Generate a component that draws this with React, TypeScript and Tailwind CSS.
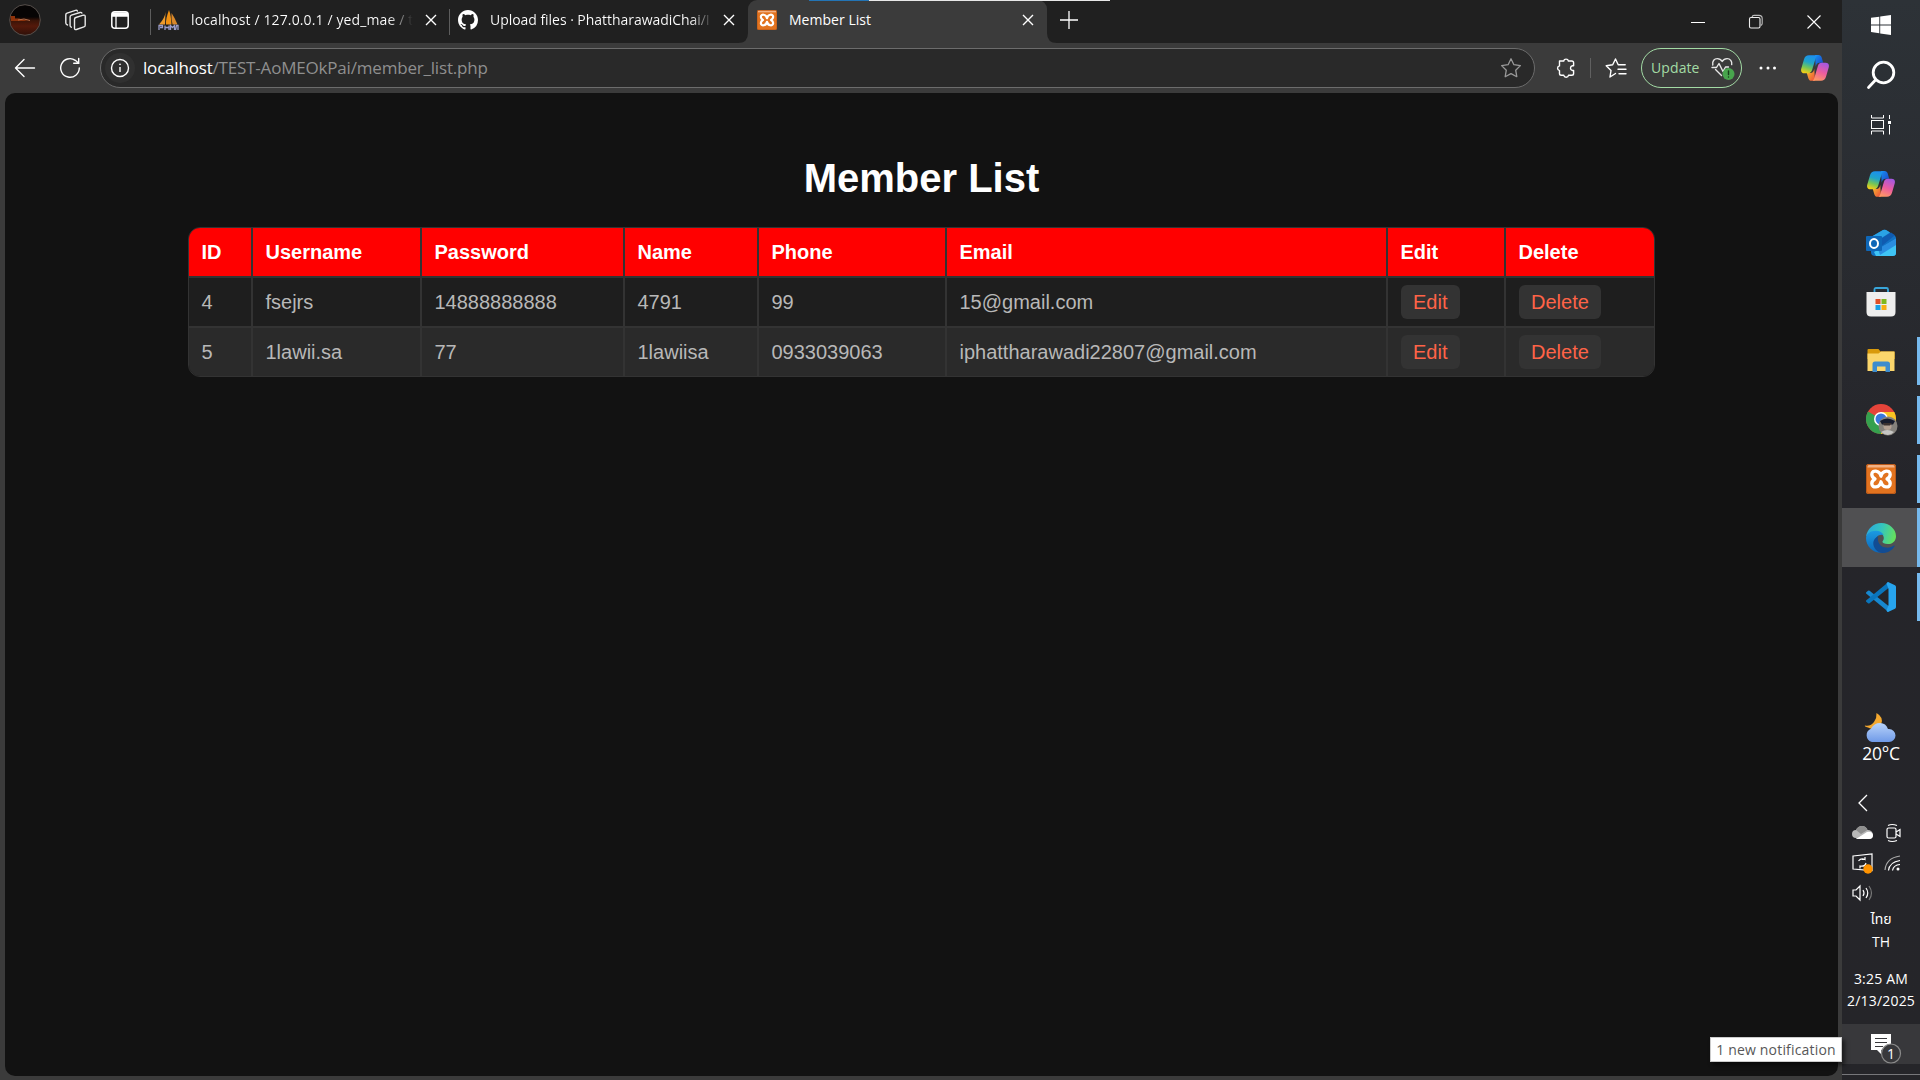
import React from 'react';

const UI = "font-['Open_Sans','Noto_Sans',sans-serif]";

const members = [
  { id: '4', username: 'fsejrs', password: '14888888888', name: '4791', phone: '99', email: '15@gmail.com' },
  { id: '5', username: '1lawii.sa', password: '77', name: '1lawiisa', phone: '0933039063', email: 'iphattharawadi22807@gmail.com' },
];

function Close({ className = '' }: { className?: string }) {
  return (
    <svg className={'shrink-0 ' + className} width="12" height="12" viewBox="0 0 12 12" stroke="#fff" strokeWidth="1.4">
      <path d="M1 1l10 10M11 1L1 11" />
    </svg>
  );
}

function XamppIcon({ size }: { size: number }) {
  return (
    <svg className="shrink-0" width={size} height={size} viewBox="0 0 30 30">
      <rect width="30" height="30" rx="2.5" fill="#e2731f" />
      <rect x="1.5" y="1" width="27" height="2.5" fill="#f2b184" />
      <rect x="0.5" y="0.5" width="29" height="29" rx="2.5" fill="none" stroke="#b9591a" />
      <path
        d="M15 12.200C13.500 6 6 5.500 5.800 10.300C5.700 12.500 7.300 14 9 15C7 16 5.700 17.500 5.800 19.700C6 24.500 13.500 24 15 17.800C16.500 24 24 24.500 24.200 19.700C24.300 17.500 23 16 21 15C22.700 14 24.300 12.500 24.200 10.300C24 5.500 16.500 6 15 12.200z"
        fill="none" stroke="#fff" strokeWidth="3.300" strokeLinejoin="round"
      />
    </svg>
  );
}

function CopilotIcon({ id }: { id: string }) {
  const a = id + 'a', b = id + 'b', c = id + 'c', d = id + 'd';
  return (
    <svg className="shrink-0" width="28" height="26" viewBox="0 0 28 26">
      <defs>
        <linearGradient id={a} x1="0.6" y1="0" x2="0.3" y2="1">
          <stop offset="0" stopColor="#1b8ff0" /><stop offset="0.4" stopColor="#20a4c8" />
          <stop offset="0.7" stopColor="#74c657" /><stop offset="1" stopColor="#f4cf16" />
        </linearGradient>
        <linearGradient id={b} x1="0.7" y1="0" x2="0.3" y2="1">
          <stop offset="0" stopColor="#a558e0" /><stop offset="0.5" stopColor="#ec5c9f" /><stop offset="1" stopColor="#ff9a62" />
        </linearGradient>
        <linearGradient id={c} x1="0" y1="0" x2="1" y2="1">
          <stop offset="0" stopColor="#1790f0" /><stop offset="1" stopColor="#1c3fc4" />
        </linearGradient>
        <linearGradient id={d} x1="0" y1="0" x2="1" y2="1">
          <stop offset="0" stopColor="#f7c22b" /><stop offset="1" stopColor="#ee4b3d" />
        </linearGradient>
      </defs>
      <path d="M14 0h3.500c1.700 0 2.700 1 3.200 2.600l1.500 5.200h-3.500c-2.500 0-3.300 1.500-4 4z" fill={`url(#${c})`} />
      <path d="M14 25.800h-3.500c-1.700 0-2.700-1-3.200-2.600L5.800 18h3.500c2.500 0 3.300-1.500 4-4z" fill={`url(#${d})`} />
      <path d="M8 .2h9.500c-1.500 0-2.300 1.200-2.800 2.900l-3.600 12c-.6 2-1.900 3.200-4 3.200H3.500C.8 18.300-.5 16.500.3 13.500L3 4.200C3.800 1.500 5.400.2 8 .2z" fill={`url(#${a})`} />
      <path d="M20 25.800h-9.500c1.500 0 2.300-1.200 2.800-2.900l3.600-12c.6-2 1.900-3.200 4-3.200h3.600c2.700 0 4 1.800 3.200 4.800L25 21.800c-.8 2.700-2.400 4-5 4z" fill={`url(#${b})`} />
    </svg>
  );
}

function TabStrip() {
  return (
    <div className="relative flex h-[43px] shrink-0 items-start bg-[#202020] text-white">
      <svg className="ml-[9px] mt-[4px] shrink-0" width="32" height="32" viewBox="0 0 32 32">
        <defs>
          <linearGradient id="avatar" x1="0" y1="0" x2="0" y2="1">
            <stop offset="0.4" stopColor="#060404" /><stop offset="0.52" stopColor="#3a1408" /><stop offset="0.7" stopColor="#54190a" /><stop offset="1" stopColor="#2e1009" />
          </linearGradient>
        </defs>
        <circle cx="16" cy="16" r="15.300" fill="url(#avatar)" stroke="#57504c" strokeWidth="1" />
        <path d="M1.500 12h4.500v2.500h4l9 2.500H2z" fill="#8f330b" />
        <path d="M9 16l6-1 6 1.500" stroke="#b56d48" fill="none" />
      </svg>
      <svg className="ml-[23px] mt-[9px] shrink-0" width="24" height="23" viewBox="0 0 24 23" fill="none" stroke="#e8e8e8" strokeWidth="1.400" strokeLinejoin="round" strokeLinecap="round">
        <path d="M10.500 10.200q0-1.300 1.300-1.700l7.500-2.300q1.900-.5 1.900 1.300v8.700q0 1.300-1.300 1.700l-7.500 2.600q-1.900.5-1.900-1.300z" />
        <path d="M7.300 18.200q-1.200-.4-1.200-1.800V8q0-1.400 1.300-1.800l8.600-2.700q1.400-.4 1.900.6" />
        <path d="M3.500 16q-1.700-.6-1.700-2V5.800q0-1.300 1.300-1.700L11.500 1.400q1.400-.4 1.900.6" />
      </svg>
      <svg className="ml-[23px] mt-[11px] shrink-0" width="18" height="18" viewBox="0 0 18 18" fill="none" stroke="#fff" strokeWidth="1.500">
        <rect x="0.800" y="0.800" width="16.400" height="16.400" rx="3" />
        <path d="M1 3.500h16" strokeWidth="4.500" />
        <path d="M5 5v12" strokeWidth="1.300" />
      </svg>
      <div className="ml-[21px] mt-[9px] h-[26px] w-px bg-[#5d5d5d]" />

      <div className="flex h-10 w-[298px] items-center pl-[7px]">
        <svg className="shrink-0" width="21" height="21" viewBox="0 0 21 21">
          <path d="M7.500 2Q7 8 1 14.500h6z" fill="#ec9a2c" />
          <path d="M11 0Q7.500 9 8 14.500h5.500Q13 5 11 0z" fill="#f29111" />
          <path d="M13.500 3Q13 9 14.500 14.500h5Q17 8 13.500 3z" fill="#d9882a" />
          <path d="M1 20v-4.500h3.500v2H2M7 20v-4.500M11 20v-4.500M7 17.500h4M12.500 20v-4.500l2 2 2-2V20M17.500 20l1-4.500h1.500V20" fill="none" stroke="#9a9cc8" strokeWidth="1.300" />
        </svg>
        <div className="ml-[12px] w-[224px] overflow-hidden whitespace-nowrap bg-gradient-to-r from-white from-88% to-transparent to-99% bg-clip-text text-[14px] leading-5 tracking-[0.120px] text-transparent">
          localhost / 127.0.0.1 / yed_mae / t
        </div>
        <Close className="ml-[10px]" />
      </div>
      <div className="mt-[9px] h-[26px] w-px bg-[#5d5d5d]" />
      <div className="flex h-10 w-[298px] items-center pl-[8px]">
        <svg className="shrink-0" width="20" height="20" viewBox="0 0 16 16" fill="#fff">
          <path d="M8 0C3.580 0 0 3.580 0 8c0 3.540 2.290 6.530 5.470 7.590.4.070.55-.17.55-.38 0-.19-.01-.82-.01-1.490-2.010.37-2.530-.49-2.690-.94-.09-.23-.48-.94-.82-1.130-.28-.15-.68-.52-.01-.53.63-.01 1.080.58 1.230.82.72 1.210 1.870.87 2.330.66.07-.52.28-.87.51-1.070-1.780-.2-3.640-.89-3.640-3.950 0-.87.310-1.590.82-2.150-.08-.2-.36-1.020.08-2.120 0 0 .67-.21 2.200.82.64-.18 1.320-.27 2-.27s1.360.09 2 .27c1.530-1.040 2.200-.82 2.200-.82.44 1.100.16 1.920.08 2.120.51.56.82 1.270.82 2.150 0 3.070-1.870 3.750-3.650 3.950.29.25.54.73.54 1.480 0 1.070-.01 1.930-.01 2.200 0 .21.15.46.55.38A8.010 8.010 0 0 0 16 8c0-4.420-3.580-8-8-8z" />
        </svg>
        <div className="ml-[12px] w-[223px] overflow-hidden whitespace-nowrap bg-gradient-to-r from-white from-90% to-transparent to-100% bg-clip-text text-[14px] leading-5 tracking-[-0.040px] text-transparent">
          Upload files · PhattharawadiChai/I
        </div>
        <Close className="ml-[10px]" />
      </div>

      <div className="relative flex h-[43px] w-[299px] items-start rounded-t-[9px] bg-[#3b3b3b] pl-[9px]">
        <svg className="absolute -left-[10px] bottom-0" width="10" height="10"><path d="M10 0v10H0Q10 10 10 0z" fill="#3b3b3b" /></svg>
        <svg className="absolute -right-[10px] bottom-0" width="10" height="10"><path d="M0 0v10h10Q0 10 0 0z" fill="#3b3b3b" /></svg>
        <div className="flex h-10 w-full items-center">
          <XamppIcon size={20} />
          <div className="ml-[12px] w-[224px] whitespace-nowrap text-[14px] leading-5 tracking-[0.030px]">Member List</div>
          <Close className="ml-[9px]" />
        </div>
      </div>
      <svg className="ml-[13px] mt-[11px] shrink-0" width="18" height="18" stroke="#fff" strokeWidth="1.300"><path d="M9 0v18M0 9h18" /></svg>
      <div className="ml-auto flex h-[43px] items-center pr-[21px]">
        <svg width="14" height="14" stroke="#fff"><path d="M0 7.500h14" /></svg>
        <svg className="ml-[43px]" width="16" height="16" fill="none" stroke="#eee" strokeWidth="1.100">
          <rect x="1.500" y="3.500" width="10.500" height="10.500" rx="1.500" />
          <path d="M4 3q.5-1.600 2-1.600h5q3.200 0 3.200 3.200v5q0 1.300-1.400 2" stroke="#bbb" />
        </svg>
        <svg className="ml-[43px]" width="14" height="14" stroke="#fff" strokeWidth="1.100"><path d="M.5.5l13 13M13.500.5l-13 13" /></svg>
      </div>
      <div className="absolute left-[809px] top-0 flex h-px w-[301px]">
        <div className="w-[60px] bg-[#2374b5]" />
        <div className="flex-1 bg-[#e8e8e8]" />
      </div>
    </div>
  );
}

function Toolbar() {
  return (
    <div className="flex h-[50px] shrink-0 items-center bg-[#3b3b3b]">
      <svg className="ml-[14px] shrink-0" width="22" height="20" fill="none" stroke="#fff" strokeWidth="1.400" strokeLinecap="round" strokeLinejoin="round">
        <path d="M20.500 10H1.500M10 1.500L1.500 10l8.500 8.500" />
      </svg>
      <svg className="ml-[23px] shrink-0" width="22" height="22" fill="none" stroke="#fff" strokeWidth="1.400" strokeLinecap="round">
        <path d="M20.300 11a9.300 9.300 0 1 1-4-7.700L19.500 6M19.700 1.500V6.300h-5" />
      </svg>
      <div className="ml-[19px] flex h-10 w-[1435px] shrink-0 items-center rounded-full border border-[#6c6c6c] bg-[#292929] pl-[4px] pr-[12px]">
        <div className="flex size-[30px] items-center justify-center rounded-full bg-[#303030]">
          <svg width="20" height="20" fill="none" stroke="#fff" strokeWidth="1.400">
            <circle cx="10" cy="10" r="8.500" /><path d="M10 9v5" /><circle cx="10" cy="6.300" r="0.500" fill="#fff" strokeWidth="0.800" />
          </svg>
        </div>
        <div className="ml-[8px] text-[17px] leading-6 tracking-[-0.190px] text-[#8f8f8f]">
          <span className="text-white">localhost</span>/TEST-AoMEOkPai/member_list.php
        </div>
        <svg className="ml-auto" width="22" height="22" viewBox="0 0 22 22" fill="none" stroke="#999" strokeWidth="1.300" strokeLinejoin="round">
          <path d="M11 1.800l2.900 5.900 6.500.9-4.700 4.600 1.100 6.500L11 16.600l-5.800 3.100 1.100-6.500L1.600 8.600l6.500-.9z" />
        </svg>
      </div>
      <svg className="ml-[20px] shrink-0" width="22" height="22" viewBox="0 0 22 22" fill="none" stroke="#fff" strokeWidth="1.400" strokeLinejoin="round">
        <path d="M4.500 4h4.200a2.400 2.400 0 0 1 4.700 0h3.400q1.800 0 1.800 1.800v3h-1.200a2.400 2.400 0 0 0 0 4.700h1.200v3q0 1.800-1.800 1.800h-3.300a2.400 2.400 0 0 1-4.700 0H6.300q-1.800 0-1.800-1.800v-2.900a2.400 2.400 0 0 1 0-4.700z" />
      </svg>
      <div className="ml-[13px] h-5 w-px bg-[#606060]" />
      <svg className="ml-[14px] mr-px shrink-0" width="22" height="22" viewBox="0 0 22 22" fill="none" stroke="#fff" strokeWidth="1.400" strokeLinejoin="round" strokeLinecap="round">
        <path d="M10.500 16.500L5 20l1-6.500L1.200 8.700l6.500-.9L10.500 2l2.700 5.800M13.200 7.800h7M13 12.300h8M14 16.800h7" />
      </svg>
      <div className="ml-[13px] flex h-10 w-[101px] shrink-0 items-center rounded-full border border-[#a3dba5] pl-[9px]">
        <span className="w-[50px] whitespace-nowrap text-[14px] leading-5 tracking-[0.100px] text-[#a3dba5]">Update</span>
        <svg className="ml-[10px] shrink-0" width="24" height="24" viewBox="0 0 24 24" fill="none" stroke="#e8e8e8" strokeWidth="1.400" strokeLinejoin="round" strokeLinecap="round">
          <path d="M1.800 9C1 5 3.500 2.600 6.300 2.600c2.500 0 4 1.400 4.900 2.900c.9-1.500 2.400-2.900 4.900-2.900c3 0 5.300 2.600 4.600 6M4.500 13.500l6 6" />
          <path d="M1 11.500h4.500l2.500-4 4 8 2.500-4.500h3" />
          <circle cx="17.500" cy="18" r="6" fill="#48a54d" stroke="none" />
          <path d="M17.500 15v3.500M17.500 21v.1" stroke="#183d1b" />
        </svg>
      </div>
      <svg className="ml-[17px] shrink-0" width="18" height="4" fill="#fff"><circle cx="2" cy="2" r="1.500" /><circle cx="9" cy="2" r="1.500" /><circle cx="15.500" cy="2" r="1.500" /></svg>
      <div className="ml-[24px]"><CopilotIcon id="tb" /></div>
    </div>
  );
}

const widths = ['w-[64px]', 'w-[169px]', 'w-[203px]', 'w-[134px]', 'w-[188px]', 'w-[441px]', 'w-[118px]', 'w-[150px]'];
const headers = ['ID', 'Username', 'Password', 'Name', 'Phone', 'Email', 'Edit', 'Delete'];

function Cell({ i, children, last }: { i: number; children: React.ReactNode; last?: boolean }) {
  return (
    <div className={`${widths[i]} flex shrink-0 items-center pl-[12.500px] ${last ? '' : 'border-r-2 border-[#333]'}`}>
      {children}
    </div>
  );
}

function ActionButton({ children }: { children: string }) {
  return <button className="h-[34px] rounded-[6px] bg-[#333] px-[12.500px] text-[20px] leading-[34px] text-[#ff6347]">{children}</button>;
}

function MemberPage() {
  return (
    <div className="ml-[5px] h-[983px] w-[1833px] overflow-hidden rounded-[10px] bg-[#121212] pt-[60px] font-['Liberation_Sans',Arial,sans-serif]">
      <h1 className="text-center text-[40px] font-bold leading-[50px] text-white">Member List</h1>
      <div className="ml-[183px] mt-[24px] w-[1467px] overflow-hidden rounded-[12px] border border-[#333] text-[20px] leading-6 text-[#b8b8b8]">
        <div className="flex h-[50px] border-b-2 border-[#333] bg-[#f00] font-bold text-white">
          {headers.map((h, i) => <Cell key={h} i={i} last={i === 7}>{h}</Cell>)}
        </div>
        {members.map((m, r) => (
          <div key={m.id} className={r === 0 ? 'flex h-[50px] border-b-2 border-[#333] bg-[#1e1e1e]' : 'flex h-[48px] bg-[#2a2a2a]'}>
            {[m.id, m.username, m.password, m.name, m.phone, m.email].map((v, i) => <Cell key={i} i={i}>{v}</Cell>)}
            <Cell i={6}><ActionButton>Edit</ActionButton></Cell>
            <Cell i={7} last><ActionButton>Delete</ActionButton></Cell>
          </div>
        ))}
      </div>
    </div>
  );
}

function AppSlot({ children, running, active }: { children: React.ReactNode; running?: boolean; active?: boolean }) {
  return (
    <div className={`relative flex h-[59px] w-full shrink-0 items-center justify-center ${active ? 'bg-[#505052]' : ''}`}>
      {children}
      {running && <div className={`absolute right-0 w-[3px] bg-[#76b9ed] ${active ? 'inset-y-0' : 'h-12'}`} />}
    </div>
  );
}

function Taskbar() {
  return (
    <div className="relative flex h-full w-[78px] shrink-0 flex-col items-center bg-gradient-to-b from-[#2d3237] via-[#25252a] via-45% to-[#252529] text-white">
      <div className="flex h-[50px] items-center">
        <svg width="20" height="20" fill="#fff"><path d="M0 2.800L8.300 1.700V9.500H0zM9.200 1.500L20 0v9.500H9.200zM0 10.400h8.300v7.900L0 17.100zM9.200 10.400H20V20L9.200 18.400z" /></svg>
      </div>
      <div className="flex h-[50px] items-center">
        <svg width="30" height="30" fill="none" stroke="#fff" strokeWidth="2.800" strokeLinecap="round"><circle cx="17.500" cy="12.500" r="10.300" /><path d="M9.500 20L2.500 27.500" /></svg>
      </div>
      <div className="flex h-[54px] items-start pt-[15px]">
        <svg width="20" height="20" fill="none" stroke="#fff" strokeWidth="1">
          <rect x="0.500" y="5.500" width="12" height="8" /><path d="M.5 0v3h12V0M.5 19.500v-3.500h12v3.500M18.500 0v4M18.500 10v9.500" /><rect x="17" y="6" width="3" height="3" fill="#fff" stroke="none" />
        </svg>
      </div>
      <AppSlot><CopilotIcon id="dock" /></AppSlot>
      <AppSlot>
        <svg width="30" height="28" viewBox="0 0 30 28">
          <path d="M5 8L17 1q1.500-.7 3 0l8.500 5.500Q30 7.500 30 9v15q0 3-3 3H9q-4 0-4-4z" fill="#1272c4" />
          <path d="M5 8L17 1q1.500-.7 3 0l4 2.500L8 14z" fill="#2aa3e6" />
          <path d="M8 14l17-10.500 4 2.700L12 20z" fill="#105bb0" />
          <path d="M30 10v14q0 3-3 3H10L8 23z" fill="#3fc4f5" />
          <path d="M12 20L30 9.500V16L14 26z" fill="#2a8de0" />
          <rect y="7" width="16" height="15" rx="1" fill="#0f67b7" />
          <ellipse cx="8" cy="14.500" rx="4" ry="4.500" fill="none" stroke="#fff" strokeWidth="2" />
        </svg>
      </AppSlot>
      <AppSlot>
        <svg width="30" height="30" viewBox="0 0 30 30">
          <path d="M8.500 6V2.500Q8.500 1 10 1h10.500Q22 1 22 2.500V6" fill="none" stroke="#38a5d9" strokeWidth="1.800" />
          <path d="M.5 5h29v20q0 4.500-4.500 4.500H5Q.5 29.500.5 25z" fill="#eeeeee" />
          <path d="M9.500 12h5v5h-5z" fill="#e04f27" /><path d="M15.500 12h5v5h-5z" fill="#7eb81f" /><path d="M9.500 18h5v5h-5z" fill="#19a0e6" /><path d="M15.500 18h5v5h-5z" fill="#f6ae13" />
        </svg>
      </AppSlot>
      <AppSlot running>
        <svg width="28" height="24" viewBox="0 0 28 24">
          <path d="M.5 1Q.5 0 1.500 0h10l2 2.500H27q.7 0 .7 1V10H.5z" fill="#d99a0b" />
          <path d="M.5 4.500h11L14 2.500h13.500V22H.5z" fill="#fbd66c" />
          <path d="M5.500 23V15q0-2.500 2.500-2.500h12.500q2.500 0 2.500 2.500v8h-4.500v-5.500h-8.500V23z" fill="#3d8ccd" />
        </svg>
      </AppSlot>
      <AppSlot running>
        <svg className="-mr-[2px]" width="32" height="32" viewBox="0 0 32 32">
          <circle cx="15" cy="15" r="15" fill="#e5443a" />
          <path d="M15 15L2 7.500A15 15 0 0 0 15 30l6-10z" fill="#35a04e" />
          <path d="M15 8h13.300A15 15 0 0 1 15 30z" fill="#f9c422" />
          <circle cx="15" cy="15" r="7" fill="#fff" /><circle cx="15" cy="15" r="5.500" fill="#3978dc" />
          <circle cx="22" cy="22" r="9.500" fill="#85817b" />
          <path d="M14 17q7-5 15 0l-2 3.500H16z" fill="#171b2c" /><ellipse cx="21.500" cy="22.500" rx="4" ry="3.500" fill="#b5a193" />
          <path d="M15 28q6-4 13 0-6 6-13 0z" fill="#c6c6c4" /><path d="M17 19h9l-2 2.500h-6z" fill="#3b302e" />
        </svg>
      </AppSlot>
      <AppSlot running><XamppIcon size={30} /></AppSlot>
      <AppSlot running active>
        <svg width="30" height="30" viewBox="0 0 256 256">
          <defs>
            <linearGradient id="edgeTop" x1="0" y1="0.300" x2="1" y2="0.500"><stop offset="0" stopColor="#2aa8dd" /><stop offset="0.500" stopColor="#35c5bd" /><stop offset="1" stopColor="#66e15c" /></linearGradient>
            <linearGradient id="edgeLeft" x1="0" y1="0" x2="0" y2="1"><stop offset="0" stopColor="#1b9be2" /><stop offset="1" stopColor="#0d66b8" /></linearGradient>
          </defs>
          <path d="M0 120C8 50 65 0 130 0c70 0 126 52 126 112 0 42-32 68-70 68-30 0-46-12-46-20 0-6 12-10 12-32 0-30-32-54-66-54C46 74 12 92 0 120z" fill="url(#edgeTop)" />
          <path d="M0 128c4-38 40-62 84-62 34 0 58 16 68 38-40-14-78 20-78 64 0 42 28 76 70 86-80 8-144-50-144-126z" fill="url(#edgeLeft)" />
          <path d="M104 112c-12 44 14 94 70 98 28 2 50-10 64-18 6-2 8 2 6 6-18 32-56 58-104 58-44-4-78-42-78-86 0-24 18-46 42-58z" fill="#124c93" />
        </svg>
      </AppSlot>
      <AppSlot running>
        <svg width="30" height="30" viewBox="0 0 30 30">
          <path d="M0 10.500L2 8.800q.8-.5 1.600 0L22.500 24v6L.4 11.700Q-.3 11 0 10.500z" fill="#1787ce" />
          <path d="M0 19.500L2 21.200q.8.500 1.600 0L22.500 6V0L.4 18.300q-.7.700-.4 1.200z" fill="#0a75bc" />
          <path d="M22 0l7 3.200q1 .5 1 1.700v20.200q0 1.200-1 1.700L22 30q-1 0-1.500-1.500L22.500 23V7l-2-5.500Q21 0 22 0z" fill="#27a4ee" />
        </svg>
      </AppSlot>

      <div className="mt-[86px] flex flex-col items-center">
        <svg className="-ml-[2px]" width="32" height="32" viewBox="0 0 32 32">
          <defs><linearGradient id="cloud" x1="0" y1="0" x2="0" y2="1"><stop offset="0" stopColor="#b9d3fa" /><stop offset="1" stopColor="#6f9ae8" /></linearGradient></defs>
          <path d="M12.500 1q8 4.500 4.500 12t-13 2.500Q0 14.500 1 13.500q6 1 9-3.500t2.500-9z" fill="#f5a92f" />
          <path d="M8 30a7 7 0 0 1-1-13.300Q10 11 16 11t8 6h1a6.500 6.500 0 0 1 0 13z" fill="url(#cloud)" />
        </svg>
        <span className="mt-[-2px] whitespace-nowrap text-[17.500px] leading-[22px] tracking-[-0.200px]">20°C</span>
      </div>
      <div className="mt-[24px] flex h-[30px] w-[62px] items-center">
        <svg className="ml-[7px]" width="12" height="18" fill="none" stroke="#fff" strokeWidth="1.300"><path d="M10 1L2 9l8 8" /></svg>
      </div>
      <div className="-mr-[2px] grid w-[60px] grid-cols-[22px_1fr] gap-x-[10px]">
        <div className="flex h-[30px] items-center">
          <svg width="22" height="16" viewBox="0 0 22 16"><path d="M4 13a4 4 0 0 1 0-8q2-4 6-4t5.500 4q5 0 5.500 5 0 4-4 4H5z" fill="#b9b9b9" /><path d="M4 14l11-7q5-1 6 3 0 4-4 4z" fill="#fff" /><path d="M4 5q2-4 6-4t5.500 4L9 9z" fill="#8e8e8e" /></svg>
        </div>
        <div className="flex h-[30px] items-center pl-[2px]">
          <svg width="18" height="20" fill="none" stroke="#fff" strokeWidth="1.200"><rect x="1" y="5" width="9" height="10" rx="1.500" /><path d="M10 9l4-2.500v7L10 11M2 2.500q4-2 9 0M2 17.500q4 2 9 0" /></svg>
        </div>
        <div className="flex h-[30px] items-center">
          <svg width="22" height="22" fill="none" stroke="#fff" strokeWidth="1.200"><path d="M1 4l19-2v16.500L1 17z" /><path d="M6.500 9Q9 5.500 13 7.500V5M13 7.500h-3M14 11q-1 4-6 3v2.500M8 14h2.500" /><circle cx="16" cy="17" r="4.700" fill="#ff9300" stroke="none" /></svg>
        </div>
        <div className="flex h-[30px] items-center">
          <svg width="18" height="18" fill="none" stroke="#fff" strokeWidth="1.200"><path d="M1 16Q2 4 16 2" stroke="#aaa" /><path d="M4.500 16.500Q5.500 8 16 6.500" /><path d="M8.500 16.500Q9.500 11 16 10.500" /><circle cx="14" cy="15" r="1.500" fill="#fff" stroke="none" /></svg>
        </div>
        <div className="flex h-[30px] items-center">
          <svg width="22" height="18" fill="none" stroke="#fff" strokeWidth="1.200"><path d="M1 6h3l4-4v14l-4-4H1zM11 6q2 3 0 6M14 4q3.500 5 0 10" /><path d="M17 2q5 7 0 14" stroke="#777" /></svg>
        </div>
      </div>
      <span className="font-['Noto_Sans_Thai','Loma','Open_Sans',sans-serif] text-[14px] leading-[23px]">ไทย</span>
      <span className="text-[14px] leading-[22px]">TH</span>
      <span className="mt-[15px] whitespace-nowrap text-[14px] leading-[22px] tracking-[0.200px]">3:25 AM</span>
      <span className="whitespace-nowrap text-[14px] leading-[22px] tracking-[0.200px]">2/13/2025</span>
      <div className="absolute bottom-[16px] left-0 flex h-10 w-full justify-center bg-[#38383b] pl-[11px] pt-[10px]">
        <svg width="32" height="30" viewBox="0 0 32 30">
          <path d="M0 0h20v16H10v4l-4-4H0z" fill="#fff" /><path d="M4 4.500h12M4 8.500h12M4 12.500h8" stroke="#38383b" strokeWidth="1.200" />
          <circle cx="20" cy="19.500" r="9.500" fill="#38383b" stroke="#8a8a8a" strokeWidth="1.200" />
          <text x="20" y="24.500" textAnchor="middle" fontSize="14" fill="#fff">1</text>
        </svg>
      </div>
      <div className="absolute bottom-[5px] left-0 h-px w-full bg-[#77777a]" />
    </div>
  );
}

export default function App() {
  return (
    <div className={`relative flex h-[1080px] w-[1920px] overflow-hidden bg-[#3b3b3b] ${UI}`}>
      <div className="flex w-[1842px] shrink-0 flex-col">
        <TabStrip />
        <Toolbar />
        <MemberPage />
      </div>
      <Taskbar />
      <div className="absolute left-[1710px] top-[1037px] flex h-[25px] w-[132px] items-center justify-center whitespace-nowrap border border-[#ccc] bg-white text-[14px] tracking-[0.180px] text-[#575757] shadow-[3px_3px_4px_rgba(0,0,0,0.5)]">
        1 new notification
      </div>
    </div>
  );
}
